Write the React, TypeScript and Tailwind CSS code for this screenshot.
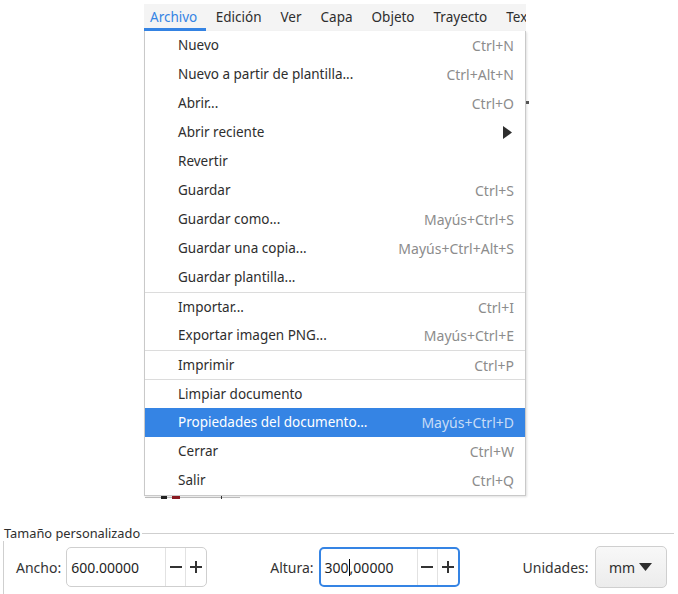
import React from "react";

type Item = { label: string; shortcut?: string; sub?: boolean; sepBefore?: boolean; active?: boolean };

const items: Item[] = [
  { label: "Nuevo", shortcut: "Ctrl+N" },
  { label: "Nuevo a partir de plantilla...", shortcut: "Ctrl+Alt+N" },
  { label: "Abrir...", shortcut: "Ctrl+O" },
  { label: "Abrir reciente", sub: true },
  { label: "Revertir" },
  { label: "Guardar", shortcut: "Ctrl+S" },
  { label: "Guardar como...", shortcut: "Mayús+Ctrl+S" },
  { label: "Guardar una copia...", shortcut: "Mayús+Ctrl+Alt+S" },
  { label: "Guardar plantilla..." },
  { label: "Importar...", shortcut: "Ctrl+I", sepBefore: true },
  { label: "Exportar imagen PNG...", shortcut: "Mayús+Ctrl+E" },
  { label: "Imprimir", shortcut: "Ctrl+P", sepBefore: true },
  { label: "Limpiar documento", sepBefore: true },
  { label: "Propiedades del documento...", shortcut: "Mayús+Ctrl+D", active: true },
  { label: "Cerrar", shortcut: "Ctrl+W" },
  { label: "Salir", shortcut: "Ctrl+Q" },
];

const menus = ["Archivo", "Edición", "Ver", "Capa", "Objeto", "Trayecto", "Texto"];

function SpinField({ value, focused }: { value: React.ReactNode; focused?: boolean }) {
  return (
    <div
      className={
        "flex h-[40px] w-[141px] items-stretch overflow-hidden rounded-[5px] bg-white " +
        (focused ? "border-2 border-[#3584e4]" : "border border-[#cfcfcf]")
      }
    >
      <div className="flex flex-1 items-center pl-[4px] text-[14px] text-[#1e1e1e]">{value}</div>
      <div className="flex w-[20px] items-center justify-center border-l border-[#e2e2e2]">
        <svg width="12" height="12" viewBox="0 0 12 12"><path d="M0 6h12" stroke="#333" strokeWidth="2" /></svg>
      </div>
      <div className="flex w-[21px] items-center justify-center border-l border-[#e2e2e2]">
        <svg width="12" height="12" viewBox="0 0 12 12"><path d="M0 6h12M6 0v12" stroke="#333" strokeWidth="2" /></svg>
      </div>
    </div>
  );
}

export default function App() {
  return (
    <div
      className="relative h-[594px] w-[678px] overflow-hidden bg-white text-[#2e2e2e]"
      style={{ fontFamily: '"Noto Sans", "Open Sans", sans-serif' }}
    >
      <div className="flex pt-[4px]">
        <div className="w-[144px] shrink-0" />
        <div className="flex w-[382px] flex-col">
          {/* menubar */}
          <div className="flex h-[27px] overflow-hidden bg-[#f4f4f4] text-[13.5px]">
            {menus.map((m, i) => (
              <div
                key={m}
                className={
                  "flex shrink-0 items-center " +
                  (i === 0 ? "border-b-[3px] border-[#3584e4] pt-[3px] text-[#3584e4]" : "text-[#2e2e2e]")
                }
                style={i === 0 ? { paddingLeft: 6, paddingRight: 9 } : { paddingLeft: 9.5, paddingRight: 9.5 }}
              >
                {m}
              </div>
            ))}
          </div>
          {/* dropdown */}
          <div className="relative flex flex-col border border-t-0 border-[#c9c9c9] bg-white shadow-[1px_1px_2px_rgba(0,0,0,0.12)]">
            {items.map((it) => (
              <div
                key={it.label}
                className={
                  "flex h-[29px] items-center pl-[33px] pr-[11px] text-[13.5px] " +
                  (it.sepBefore ? "border-t border-[#dcdcdc] " : "") +
                  (it.active ? "bg-[#3584e4] text-white" : "text-[#2e2e2e]")
                }
              >
                <span className="flex-1">{it.label}</span>
                {it.shortcut && (
                  <span className={"text-[14px] " + (it.active ? "text-[#c8dcf6]" : "text-[#8c8c8c]")}>
                    {it.shortcut}
                  </span>
                )}
                {it.sub && (
                  <svg width="9" height="13" viewBox="0 0 9 13" className="mr-[2px]">
                    <path d="M0 0L9 6.5L0 13Z" fill="#2e2e2e" />
                  </svg>
                )}
              </div>
            ))}
            <div className="absolute right-[-4px] top-[70px] h-[3px] w-[3px] bg-[#555]" />
          </div>
          {/* fragments under menu */}
          <div className="relative h-[4px]">
            <div className="absolute left-[1px] top-[1px] h-[1px] w-[95px] bg-[#bbb]" />
            <div className="absolute left-[17px] top-[0px] h-[3px] w-[6px] bg-[#222]" />
            <div className="absolute left-[28px] top-[0px] h-[3px] w-[8px] bg-[#8a1a22]" />
            <div className="absolute left-[77px] top-[0px] h-[3px] w-[1px] bg-[#333]" />
          </div>
        </div>
      </div>

      {/* frame */}
      <div className="mt-[25px] flex flex-col">
        <div className="flex items-center">
          <span className="pl-[4px] pr-[2px] text-[12.8px] leading-[16px] text-[#2e2e2e]">Tamaño personalizado</span>
          <div className="mr-[4px] h-[1px] flex-1 bg-[#cfcfcf]" />
        </div>
        <div className="ml-[3px] flex h-[60px] items-start border-l border-[#cfcfcf] pt-[5px]">
          <div className="flex items-center">
            <span className="ml-[12px] mr-[5px] text-[14px] text-[#333]">Ancho:</span>
            <SpinField value="600.00000" />
            <span className="ml-[63px] mr-[5px] text-[14px] text-[#333]">Altura:</span>
            <SpinField
              focused
              value={
                <span className="relative">
                  300
                  <span className="inline-block h-[17px] w-[1px] translate-y-[3px] bg-black" />
                  ,00000
                </span>
              }
            />
            <span className="ml-[63px] mr-[6px] text-[14px] text-[#333]">Unidades:</span>
            <div className="flex h-[42px] w-[72px] items-center justify-center gap-[4px] rounded-[5px] border border-[#cfcfcf] bg-gradient-to-b from-[#f8f8f8] to-[#ececec] text-[14px] text-[#2e2e2e]">
              mm
              <svg width="13" height="8" viewBox="0 0 13 8"><path d="M0 0h13L6.5 8Z" fill="#2e2e2e" /></svg>
            </div>
          </div>
        </div>
      </div>
    </div>
  );
}
